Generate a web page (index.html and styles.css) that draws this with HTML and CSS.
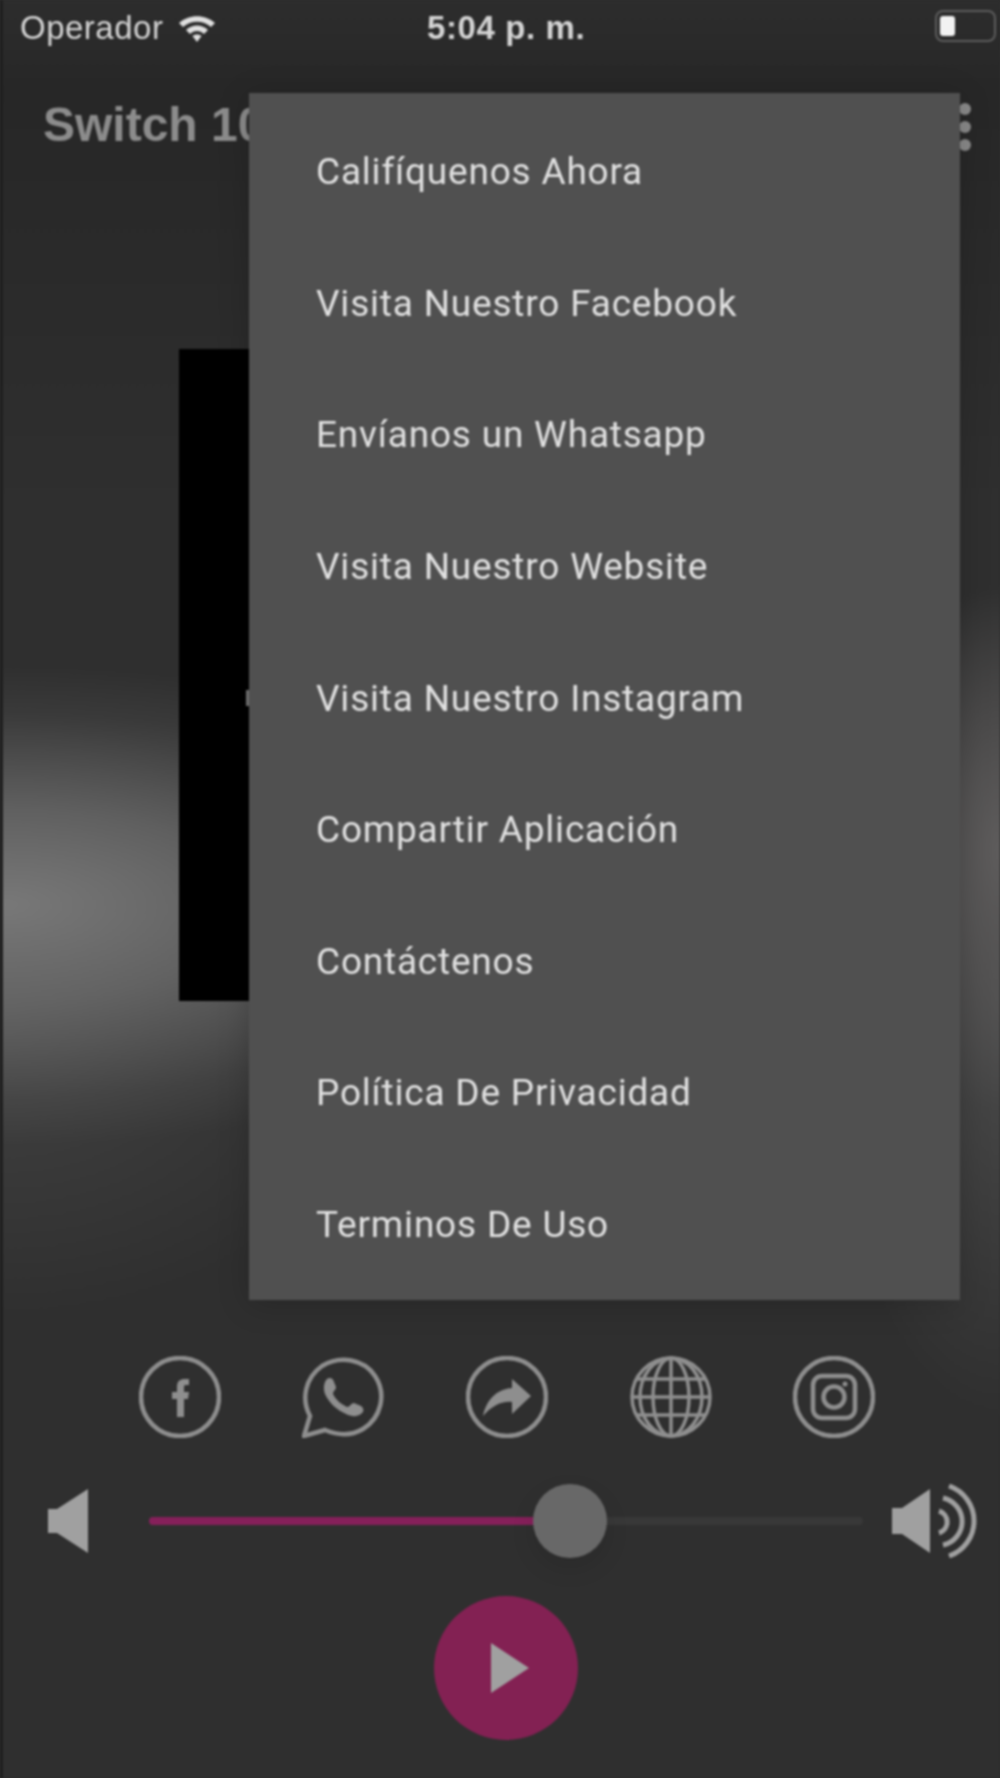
FILE: index.html
```html
<!DOCTYPE html>
<html lang="es">
<head>
    <meta charset="UTF-8">
    <title>Switch 100</title>
    <meta name="viewport" content="width=device-width, initial-scale=1.0">
    <link rel="stylesheet" href="styles.css">
</head>
<body>
    <div class="phone">
        <div class="status-bar">
            <div class="status-left">
                <span>Operador</span>
                <svg class="wifi" viewBox="0 0 40 30" width="40" height="30">
                    <path d="M2 10 C12 1 28 1 38 10 L34 14 C26 7 14 7 6 14 Z"/>
                    <path d="M9 17 C15 11 25 11 31 17 L27 21 C23 17 17 17 13 21 Z"/>
                    <path d="M15.5 23 C18 21 22 21 24.5 23 L20 29 Z"/>
                </svg>
            </div>
            <span class="status-time">5:04 p. m.</span>
            <div class="battery"><div class="battery-level"></div></div>
        </div>

        <div class="app-bar">
            <h1>Switch 100</h1>
            <div class="kebab"><i></i><i></i><i></i></div>
        </div>

        <div class="cover"><i class="cover-letter"></i></div>

        <div class="social">
            <svg class="social-icon" viewBox="0 0 82 82">
                <circle cx="41" cy="41" r="39"/>
                <path class="solid" d="M38 61 V43 H33 V36 H38 V31 C38 25 41 23 46 23 H50 V29 H47 C45 29 45 30 45 32 V36 H50 L49 43 H45 V61 Z"/>
            </svg>
            <svg class="social-icon" viewBox="0 0 82 82">
                <path d="M2 80 L8 60 C-1 43 3 22 20 10 C38 -1 62 3 73 20 C85 38 79 62 61 73 C49 80 35 79 23 74 Z"/>
                <path class="solid" d="M25 23 C28 21 31 22 32 26 L34 31 C34 34 31 35 31 38 C34 44 39 48 45 51 C48 51 49 47 52 47 L59 50 C62 52 62 56 60 57 C56 61 50 61 44 58 C35 54 27 47 23 38 C21 32 22 26 25 23 Z"/>
            </svg>
            <svg class="social-icon" viewBox="0 0 82 82">
                <circle cx="41" cy="41" r="39"/>
                <path class="solid" d="M46 23 L65 40 L46 58 V46 C35 45 26 50 17 60 C20 45 30 33 46 32 Z"/>
            </svg>
            <svg class="social-icon globe" viewBox="0 0 82 82">
                <circle cx="41" cy="41" r="39"/>
                <ellipse cx="41" cy="41" rx="18" ry="39"/>
                <ellipse cx="41" cy="41" rx="31" ry="39"/>
                <path d="M41 2 V80 M2 41 H80 M6.4 23 H75.6 M6.4 59 H75.6"/>
            </svg>
            <svg class="social-icon" viewBox="0 0 82 82">
                <circle cx="41" cy="41" r="39"/>
                <rect x="20" y="20" width="42" height="42" rx="9"/>
                <circle cx="41" cy="41" r="10.5"/>
                <circle class="solid" cx="52" cy="28" r="2.5"/>
            </svg>
        </div>

        <div class="volume">
            <svg class="vol-low" viewBox="0 0 40 64" width="40" height="64">
                <path d="M0 20 H9 L40 0 V64 L9 44 H0 Z"/>
            </svg>
            <div class="track">
                <div class="track-fill"></div>
                <div class="thumb"></div>
            </div>
            <svg class="vol-high" viewBox="0 0 86 74" width="86" height="74">
                <path class="cone" d="M0 24 H10 L38 5 V69 L10 50 H0 Z"/>
                <path d="M47 27 A11.5 11.5 0 0 1 47 49"/>
                <path d="M51 14 A24 24 0 0 1 51 61"/>
                <path d="M57 2 A37 37 0 0 1 57 72"/>
            </svg>
        </div>

        <button class="play">
            <svg viewBox="0 0 38 50" width="38" height="50"><path d="M0 0 L38 25 L0 50 Z"/></svg>
        </button>

        <ul class="menu">
            <li>Califíquenos Ahora</li>
            <li>Visita Nuestro Facebook</li>
            <li>Envíanos un Whatsapp</li>
            <li>Visita Nuestro Website</li>
            <li>Visita Nuestro Instagram</li>
            <li>Compartir Aplicación</li>
            <li>Contáctenos</li>
            <li>Política De Privacidad</li>
            <li>Terminos De Uso</li>
        </ul>
    </div>
</body>
</html>
```

FILE: styles.css
```css
body {
    margin: 0;
    padding: 0;
    background-color: #2e2e2e;
    font-family: 'Liberation Sans', Arial, sans-serif;
}

.phone {
    position: relative;
    width: 1000px;
    height: 1778px;
    box-sizing: border-box;
    overflow: hidden;
    display: flex;
    flex-direction: column;
    border-left: 3px solid #1f1f1f;
    filter: blur(0.8px);
    background:
        radial-gradient(ellipse 620px 240px at 0 905px, #787878 0%, rgba(120, 120, 120, 0.64) 40%, rgba(120, 120, 120, 0.15) 80%, rgba(120, 120, 120, 0) 100%),
        radial-gradient(ellipse 400px 300px at 0 1020px, rgba(80, 80, 80, 0.6) 0%, rgba(80, 80, 80, 0) 100%),
        radial-gradient(ellipse 150px 260px at 1000px 850px, #5e5c5c 0%, rgba(94, 92, 92, 0) 100%),
        radial-gradient(ellipse 180px 420px at 1000px 1000px, rgba(80, 80, 80, 0.85) 0%, rgba(80, 80, 80, 0) 100%),
        linear-gradient(#2d2d2d 0, #272727 90px, #2f2f2f 500px, #2f2f2f 100%);
}

.status-bar {
    height: 56px;
    display: flex;
    align-items: center;
    justify-content: space-between;
    padding: 0 4px 0 17px;
    color: #d4d4d4;
    font-size: 33px;
    letter-spacing: 0.5px;
}

.status-left {
    display: flex;
    align-items: center;
    gap: 14px;
}

.wifi path {
    fill: #e0e0e0;
}

.status-time {
    position: absolute;
    left: 424px;
    top: 9px;
    font-weight: bold;
    letter-spacing: 0.6px;
}

.battery {
    position: relative;
    width: 61px;
    height: 32px;
    padding: 4px 3px;
    box-sizing: border-box;
    border: 2px solid #5c5c5c;
    border-radius: 8px;
    margin-top: -4px;
}

.battery-level {
    width: 15px;
    height: 100%;
    background-color: #f2f2f2;
    border-radius: 3px;
}

.app-bar {
    height: 138px;
    display: flex;
    justify-content: space-between;
    padding: 0 29px 0 40px;
}

h1 {
    margin: 41px 0 0;
    font-size: 48px;
    line-height: 56px;
    color: #8c8c8c;
}

.kebab {
    display: flex;
    flex-direction: column;
    gap: 6px;
    padding-top: 47px;
}

.kebab i {
    display: block;
    width: 12px;
    height: 12px;
    border-radius: 50%;
    background-color: #8a8a8a;
}

.cover {
    width: 652px;
    height: 652px;
    margin: 155px 0 0 176px;
    background-color: #000;
    flex-shrink: 0;
}

.cover-letter {
    display: block;
    width: 3px;
    height: 16px;
    margin: 341px 0 0 67px;
    float: left;
    background-color: #777;
}

.social {
    display: flex;
    gap: 81.7px;
    padding-left: 135.5px;
    margin-top: 355px;
}

.social-icon {
    width: 82px;
    height: 82px;
    flex-shrink: 0;
    fill: none;
    stroke: #8e8e8e;
    stroke-width: 4.5;
}

.globe {
    stroke-width: 3.5;
}

.solid {
    fill: #8e8e8e;
    stroke: none;
}

.volume {
    display: flex;
    align-items: center;
    height: 74px;
    margin-top: 46px;
    padding-left: 45px;
}

.vol-low {
    fill: #a0a0a0;
    flex-shrink: 0;
}

.track {
    position: relative;
    width: 714px;
    height: 8px;
    margin: 0 29px 0 61px;
    background-color: #383838;
    border-radius: 4px;
    flex-shrink: 0;
}

.track-fill {
    width: 421px;
    height: 100%;
    background-color: #85205a;
    border-radius: 4px 0 0 4px;
}

.thumb {
    position: absolute;
    left: 384px;
    top: -33px;
    width: 74px;
    height: 74px;
    border-radius: 50%;
    background-color: #686868;
    box-shadow: 0 10px 24px rgba(0, 0, 0, 0.1);
}

.vol-high {
    flex-shrink: 0;
    fill: none;
    stroke: #a0a0a0;
    stroke-width: 5;
}

.vol-high .cone {
    fill: #a0a0a0;
    stroke: none;
}

.play {
    display: flex;
    align-items: center;
    justify-content: center;
    width: 144px;
    height: 144px;
    margin: 38px 0 0 431px;
    padding: 0 0 0 8px;
    border: none;
    border-radius: 50%;
    background-color: #832153;
}

.play path {
    fill: #a0a0a0;
}

.menu {
    position: absolute;
    left: 246px;
    top: 93px;
    width: 711px;
    height: 1207px;
    box-sizing: border-box;
    margin: 0;
    padding: 13px 0 0;
    list-style: none;
    background-color: #505050;
    box-shadow: 0 4px 30px rgba(0, 0, 0, 0.18);
    color: #e0e0e0;
    font-family: Roboto, sans-serif;
    font-size: 37px;
    letter-spacing: 0.8px;
}

.menu li {
    height: 131.6px;
    display: flex;
    align-items: center;
    padding-left: 67px;
}
```
